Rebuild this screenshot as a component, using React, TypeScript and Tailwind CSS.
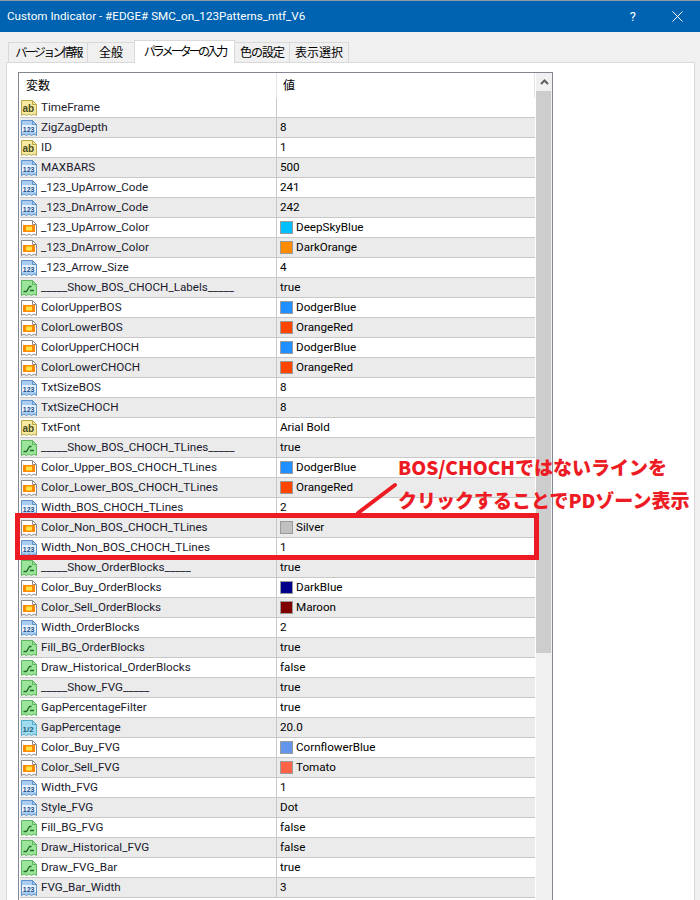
type Kind = 'ab' | 'num' | 'color' | 'bool' | 'dbl';

type Row = { name: string; kind: Kind; value: string; swatch?: string };

const rows: Row[] = [
  { name: 'TimeFrame', kind: 'ab', value: '' },
  { name: 'ZigZagDepth', kind: 'num', value: '8' },
  { name: 'ID', kind: 'ab', value: '1' },
  { name: 'MAXBARS', kind: 'num', value: '500' },
  { name: '_123_UpArrow_Code', kind: 'num', value: '241' },
  { name: '_123_DnArrow_Code', kind: 'num', value: '242' },
  { name: '_123_UpArrow_Color', kind: 'color', value: 'DeepSkyBlue', swatch: '#00bfff' },
  { name: '_123_DnArrow_Color', kind: 'color', value: 'DarkOrange', swatch: '#ff8c00' },
  { name: '_123_Arrow_Size', kind: 'num', value: '4' },
  { name: '_____Show_BOS_CHOCH_Labels_____', kind: 'bool', value: 'true' },
  { name: 'ColorUpperBOS', kind: 'color', value: 'DodgerBlue', swatch: '#1e90ff' },
  { name: 'ColorLowerBOS', kind: 'color', value: 'OrangeRed', swatch: '#ff4500' },
  { name: 'ColorUpperCHOCH', kind: 'color', value: 'DodgerBlue', swatch: '#1e90ff' },
  { name: 'ColorLowerCHOCH', kind: 'color', value: 'OrangeRed', swatch: '#ff4500' },
  { name: 'TxtSizeBOS', kind: 'num', value: '8' },
  { name: 'TxtSizeCHOCH', kind: 'num', value: '8' },
  { name: 'TxtFont', kind: 'ab', value: 'Arial Bold' },
  { name: '_____Show_BOS_CHOCH_TLines_____', kind: 'bool', value: 'true' },
  { name: 'Color_Upper_BOS_CHOCH_TLines', kind: 'color', value: 'DodgerBlue', swatch: '#1e90ff' },
  { name: 'Color_Lower_BOS_CHOCH_TLines', kind: 'color', value: 'OrangeRed', swatch: '#ff4500' },
  { name: 'Width_BOS_CHOCH_TLines', kind: 'num', value: '2' },
  { name: 'Color_Non_BOS_CHOCH_TLines', kind: 'color', value: 'Silver', swatch: '#c0c0c0' },
  { name: 'Width_Non_BOS_CHOCH_TLines', kind: 'num', value: '1' },
  { name: '_____Show_OrderBlocks_____', kind: 'bool', value: 'true' },
  { name: 'Color_Buy_OrderBlocks', kind: 'color', value: 'DarkBlue', swatch: '#00008b' },
  { name: 'Color_Sell_OrderBlocks', kind: 'color', value: 'Maroon', swatch: '#800000' },
  { name: 'Width_OrderBlocks', kind: 'num', value: '2' },
  { name: 'Fill_BG_OrderBlocks', kind: 'bool', value: 'true' },
  { name: 'Draw_Historical_OrderBlocks', kind: 'bool', value: 'false' },
  { name: '_____Show_FVG_____', kind: 'bool', value: 'true' },
  { name: 'GapPercentageFilter', kind: 'bool', value: 'true' },
  { name: 'GapPercentage', kind: 'dbl', value: '20.0' },
  { name: 'Color_Buy_FVG', kind: 'color', value: 'CornflowerBlue', swatch: '#6495ed' },
  { name: 'Color_Sell_FVG', kind: 'color', value: 'Tomato', swatch: '#ff6347' },
  { name: 'Width_FVG', kind: 'num', value: '1' },
  { name: 'Style_FVG', kind: 'num', value: 'Dot' },
  { name: 'Fill_BG_FVG', kind: 'bool', value: 'false' },
  { name: 'Draw_Historical_FVG', kind: 'bool', value: 'false' },
  { name: 'Draw_FVG_Bar', kind: 'bool', value: 'true' },
  { name: 'FVG_Bar_Width', kind: 'num', value: '3' },
];

const palette: Record<Kind, { fill: string; stroke: string }> = {
  ab: { fill: '#f7eb9f', stroke: '#b8a54e' },
  num: { fill: '#a9cdf0', stroke: '#5f93c8' },
  color: { fill: '#ffffff', stroke: '#8a8a8a' },
  bool: { fill: '#9be59a', stroke: '#5fb55f' },
  dbl: { fill: '#9fdcf0', stroke: '#58a9c8' },
};

const sheet = 'M0.5 0.5H11.5L15.5 4.5V15.5L13 14L10.5 15.5L8 14L5.5 15.5L3 14L0.5 15.5Z';

const RowIcon = ({ kind }: { kind: Kind }) => {
  const { fill, stroke } = palette[kind];
  return (
    <svg width="16" height="16" viewBox="0 0 16 16" className="shrink-0">
      <path d={sheet} fill={fill} stroke={stroke} />
      <path d="M11.5 0.5V4.5H15.5" fill="none" stroke={stroke} />
      {kind === 'ab' && (
        <text x="1.5" y="11.5" fontSize="10" fontWeight="700" fill="#4a4a20" fontFamily="Liberation Sans, sans-serif">
          ab
        </text>
      )}
      {kind === 'num' && (
        <>
          <rect x="1" y="5" width="14" height="7" fill="#e6f1fb" />
          <text x="1.8" y="11.5" fontSize="7" fontWeight="700" fill="#1c4f8c" fontFamily="Liberation Sans, sans-serif">
            123
          </text>
        </>
      )}
      {kind === 'dbl' && (
        <text x="1.5" y="11.5" fontSize="8" fontWeight="700" fill="#1f5f7a" fontFamily="Liberation Sans, sans-serif">
          1/2
        </text>
      )}
      {kind === 'color' && (
        <>
          <rect x="2" y="5" width="12" height="7" fill="#ff8a00" />
          <rect x="5" y="6.5" width="6" height="4" fill="#ffe34d" />
        </>
      )}
      {kind === 'bool' && (
        <path d="M2.5 11.5H5.5L8.5 6.5H10.5M9 10.5H13" fill="none" stroke="#1e6b2a" strokeWidth="1.3" />
      )}
    </svg>
  );
};

const App = () => {
  return (
    <div className="relative w-[700px] h-[900px] overflow-hidden bg-[#f0f0f0] font-['Roboto','Noto_Sans_CJK_JP',sans-serif] text-[11.65px] text-black">
      <header className="h-8 flex items-center justify-between bg-[#0063b1] border-t border-[#8f9aa3] text-white">
        <span className="pl-[7px]">Custom Indicator - #EDGE# SMC_on_123Patterns_mtf_V6</span>
        <div className="flex items-center gap-[36px] pr-[17px]">
          <span className="text-[13px]">?</span>
          <svg width="11" height="11" viewBox="0 0 11 11" className="stroke-white">
            <path d="M0.5 0.5L10.5 10.5M10.5 0.5L0.5 10.5" fill="none" />
          </svg>
        </div>
      </header>

      <nav className="flex items-end h-[30px] pl-2 text-[12px] font-['Noto_Sans_CJK_JP',sans-serif]">
        <span className="w-[80px] h-[20px] pb-[2px] -mr-px flex items-center justify-center border border-b-0 border-[#d9d9d9] tracking-[-2.6px]">
          バージョン情報
        </span>
        <span className="w-[48px] h-[20px] pb-[2px] -mr-px flex items-center justify-center border border-b-0 border-[#d9d9d9]">
          全般
        </span>
        <span className="relative z-10 -mb-px w-[101px] h-[23px] pb-[2px] flex items-center justify-center bg-white border border-b-0 border-[#d9d9d9] tracking-[-2.9px]">
          パラメーターの入力
        </span>
        <span className="w-[56px] h-[20px] pb-[2px] -ml-px flex items-center justify-center border border-b-0 border-[#d9d9d9] tracking-[-1px]">
          色の設定
        </span>
        <span className="w-[60px] h-[20px] pb-[2px] -ml-px flex items-center justify-center border border-b-0 border-[#d9d9d9]">
          表示選択
        </span>
      </nav>

      <section className="ml-[6px] w-[689px] h-[840px] bg-white border border-[#d9d9d9] pl-[11px] pt-[9px]">
        <div className="w-[535px] h-[900px] border border-b-0 border-[#828790] flex pl-px bg-white">
          <div className="w-[515px] shrink-0">
            <div className="h-[25px] flex border-r border-[#e5e5e5] text-[12px] font-['Noto_Sans_CJK_JP',sans-serif]">
              <div className="w-[257px] pl-[6px] pt-[3px] border-r border-[#e5e5e5]">変数</div>
              <div className="pl-[6px] pt-[3px]">値</div>
            </div>
            {rows.map((row, i) => (
              <div
                key={row.name}
                className={`h-5 flex items-center border-b border-[#c8c8c8] ${i % 2 === 1 ? 'bg-[#ebebeb]' : 'bg-white'}`}
              >
                <div className="w-[257px] h-full shrink-0 flex items-center gap-1 pl-px whitespace-nowrap border-r border-[#c8c8c8]">
                  <RowIcon kind={row.kind} />
                  <span className="text-[#1a1a2e]">{row.name}</span>
                </div>
                <div className="pl-[3px] flex items-center gap-[3px]">
                  {row.swatch && (
                    <span className="size-[13px] border border-[#9a9a9a]" style={{ backgroundColor: row.swatch }} />
                  )}
                  <span>{row.value}</span>
                </div>
              </div>
            ))}
          </div>
          <div className="w-4 ml-px bg-[#f0f0f0] flex flex-col">
            <div className="h-[18px] flex items-center justify-center">
              <svg width="9" height="6" viewBox="0 0 9 6">
                <path d="M1 5L4.5 1.5L8 5" fill="none" stroke="#606060" strokeWidth="2" />
              </svg>
            </div>
            <div className="h-[562px] w-[15px] bg-[#cdcdcd]" />
          </div>
        </div>
      </section>

      {/* red annotation on top of the table */}
      <div className="absolute left-[15px] top-[513px] w-[524px] h-[47px] border-[5px] border-[#ed1c24]" />
      <svg className="absolute left-[350px] top-[480px]" width="50" height="40" viewBox="0 0 50 40">
        <path d="M8 33L45 5" stroke="#ed1c24" strokeWidth="4" strokeLinecap="round" fill="none" />
      </svg>
      <div className="absolute left-[398px] top-[453px] leading-7 font-['Noto_Sans_CJK_JP','Noto_Sans',sans-serif] font-black text-[19px] text-[#ed1c24] whitespace-nowrap">
        BOS/CHOCHではないラインを
      </div>
      <div className="absolute left-[398px] top-[486px] leading-7 font-['Noto_Sans_CJK_JP','Noto_Sans',sans-serif] font-black text-[19px] text-[#ed1c24] whitespace-nowrap">
        クリックすることでPDゾーン表示
      </div>
    </div>
  );
};

export default App;
